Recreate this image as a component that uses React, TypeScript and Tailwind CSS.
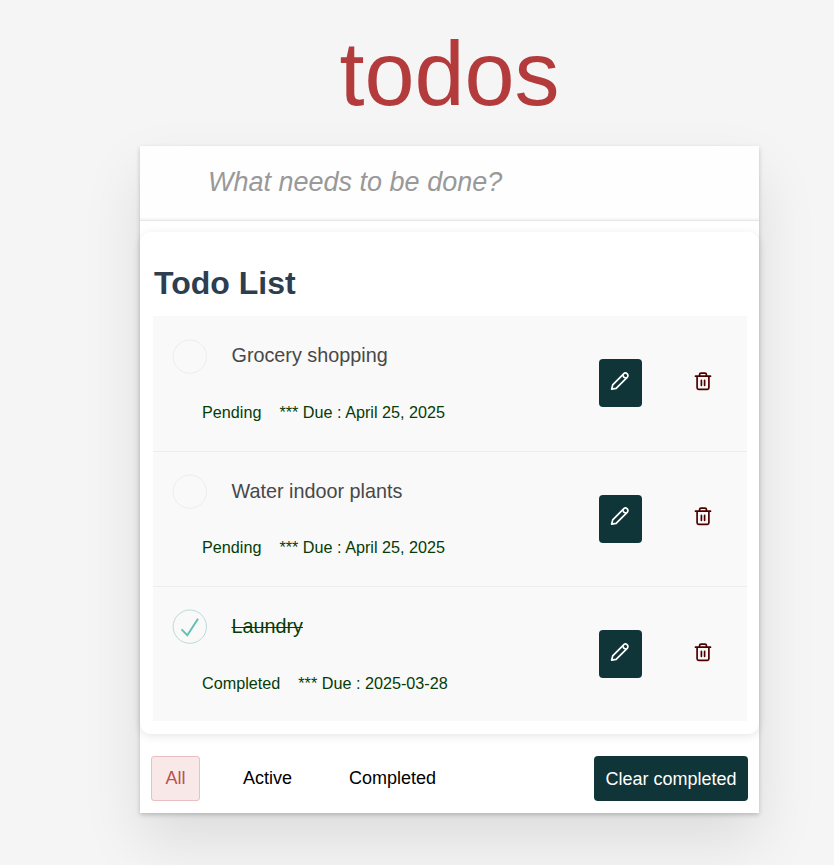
const todos = [
  { title: "Grocery shopping", status: "Pending", due: "April 25, 2025", done: false },
  { title: "Water indoor plants", status: "Pending", due: "April 25, 2025", done: false },
  { title: "Laundry", status: "Completed", due: "2025-03-28", done: true },
];

function Pencil() {
  return (
    <svg width="20" height="20" viewBox="0 0 20 20" fill="none" stroke="currentColor" strokeWidth="1.7" strokeLinejoin="round">
      <path d="M1.6 18.2 2.7 13.9 13.6 2.8a2.5 2.5 0 0 1 3.6 3.6L6.1 17.3z" />
      <path d="M13 3.4c-.2 2.3 1.2 3.7 3.6 3.6" />
    </svg>
  );
}

function Trash() {
  return (
    <svg width="18" height="20" viewBox="0 0 18 20" fill="none" stroke="currentColor" strokeWidth="1.7" strokeLinecap="round" strokeLinejoin="round">
      <path d="M1.5 5.2h15M5.6 5V3.6c0-.9.6-1.5 1.5-1.5h3.8c.9 0 1.5.6 1.5 1.5V5M3.1 5.3v11.4c0 1 .6 1.6 1.6 1.6h8.6c1 0 1.6-.6 1.6-1.6V5.3M7.4 9.4v4.9M10.6 9.4v4.9" />
    </svg>
  );
}

function CheckCircle({ done }: { done: boolean }) {
  return (
    <svg className="mt-[17.3px] shrink-0" width="45" height="45" viewBox="-10 -18 100 135">
      <circle cx="50" cy="50" r="50" fill="none" stroke={done ? "#bddad5" : "#ededed"} strokeWidth="3" />
      {done && <path fill="#5dc2af" d="M72 25L42 71 27 56l-4 4 20 20 34-52z" />}
    </svg>
  );
}

export default function App() {
  return (
    <div className="h-[865px] overflow-hidden bg-[#f5f5f5] pl-[140px] font-['Liberation_Sans',Arial,sans-serif]">
      <h1 className="h-[146px] w-[619px] pt-[22px] text-center text-[90px] leading-[104px] font-normal text-[#b33b3c]">todos</h1>
      <main className="h-[667px] w-[619px] bg-white shadow-[0_2px_4.5px_0_rgba(0,0,0,0.2),0_28px_56px_0_rgba(0,0,0,0.1)]">
        <header className="h-[75px] border-b border-[#e6e6e6] bg-[#fefefe] shadow-[inset_0_-2px_1px_rgba(0,0,0,0.03)]">
          <input aria-label="New todo" placeholder="What needs to be done?" className="h-[72px] w-full bg-transparent pl-[68px] text-[27px] outline-none placeholder:text-[#999] placeholder:italic" />
        </header>
        <section className="mt-[11px] h-[502px] rounded-[11px] bg-white px-[13px] shadow-[0_2px_10px_rgba(0,0,0,0.1)]">
          <h2 className="h-[84.3px] pt-[32px] pl-px text-[32px] leading-[38px] font-bold text-[#2c3e50]">Todo List</h2>
          <ul className="w-[594px] bg-[#f9f9f9]">
            {todos.map((t) => (
              <li key={t.title} className="flex h-[135.33px] border-b border-[#ededed] last:h-[134.04px] last:border-b-0">
                <div className="w-[446px]">
                  <div className="flex h-[78px] pl-[11px]">
                    <CheckCircle done={t.done} />
                    <span className={`pt-[24px] pl-[22.5px] text-[19.8px] leading-[30px] ${t.done ? "text-[#063c06] line-through decoration-1" : "text-[#484848]"}`}>{t.title}</span>
                  </div>
                  <p className="flex gap-[18px] pt-[7.75px] pl-[49px] text-[16.2px] leading-[20px] text-[#063c06]">
                    <span>{t.status}</span>
                    <span>*** Due : {t.due}</span>
                  </p>
                </div>
                <button aria-label="Edit" className="mt-[43px] flex h-[48px] w-[43px] justify-center rounded-[4px] bg-[#103538] pt-[11.75px] pr-[2px] text-white"><Pencil /></button>
                <button aria-label="Delete" className="mt-[54.75px] ml-[52px] h-5 text-[#4d0000]"><Trash /></button>
              </li>
            ))}
          </ul>
        </section>
        <footer className="flex h-[79px] items-start px-[11px] pt-[22px] text-[18px] leading-[45px] text-black">
          <button className="h-[45px] w-[49px] rounded-[3px] border border-[#e9bfc1] bg-[#f8e8e8] leading-[43px] text-[#b8534f]">All</button>
          <button className="ml-[43px]">Active</button>
          <button className="ml-[57px]">Completed</button>
          <button className="ml-auto h-[45px] w-[154px] rounded-[4px] bg-[#103538] leading-[46px] text-white">Clear completed</button>
        </footer>
      </main>
    </div>
  );
}
